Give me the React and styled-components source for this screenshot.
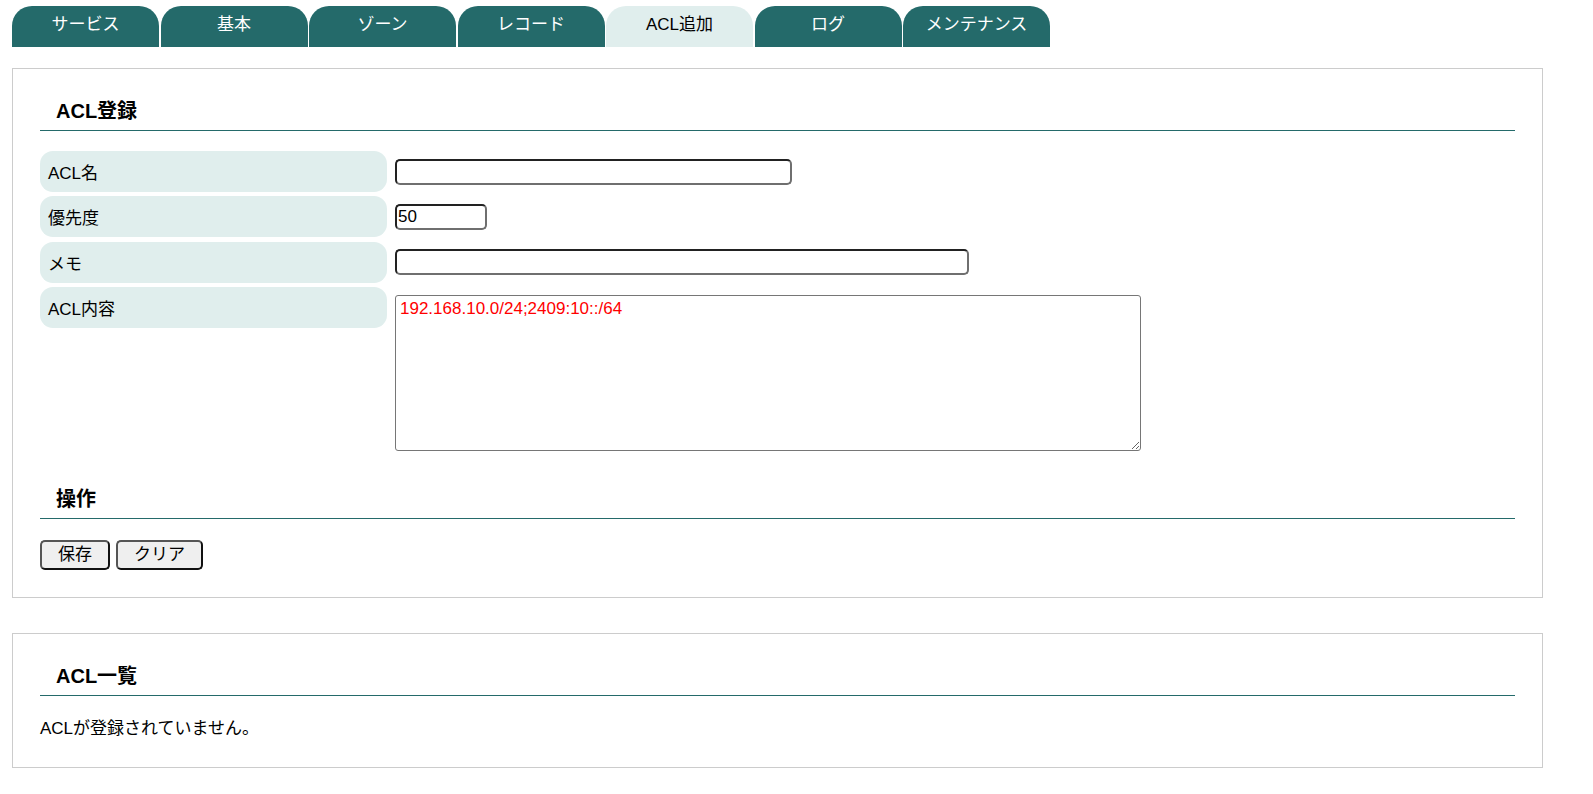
import React from "react";
import styled, { createGlobalStyle } from "styled-components";

const GlobalStyle = createGlobalStyle`
  body {
    margin: 0;
    background: #fff;
    font-family: "Liberation Sans", Arial, "Noto Sans CJK JP", sans-serif;
    font-size: 17px;
    color: #000;
  }
`;

const Page = styled.div`
  padding: 6px 50px 10px 12px;
`;

const TabBar = styled.nav`
  display: flex;
  gap: 1.5px;
  height: 41px;
`;

const Tab = styled.div`
  width: 147px;
  height: 41px;
  box-sizing: border-box;
  padding-top: 9px;
  line-height: 20px;
  text-align: center;
  border-radius: 20px 20px 0 0;
  background: ${(p) => (p.$active ? "#e0eeed" : "#246a6a")};
  color: ${(p) => (p.$active ? "#000" : "#fff")};
  cursor: pointer;
`;

const Panel = styled.section`
  margin-top: ${(p) => p.$top || 21}px;
  border: 1px solid #ccc;
  padding: 30px 27px ${(p) => p.$bottom || 27}px;
`;

const Heading = styled.h3`
  margin: ${(p) => p.$top || 0}px 0 0;
  padding: 0 16px 7px;
  font-size: 20px;
  font-weight: bold;
  line-height: 24px;
  border-bottom: 1px solid #246a6a;
`;

const Form = styled.div`
  margin-top: 20px;
  display: flex;
  flex-direction: column;
  gap: 4.4px;
`;

const Row = styled.div`
  display: flex;
  align-items: flex-start;
  gap: 8px;
`;

const Label = styled.div`
  width: 347px;
  height: 41px;
  flex: none;
  box-sizing: border-box;
  display: flex;
  align-items: center;
  padding: 0 8px;
  background: #e0eeed;
  border-radius: 13px;
`;

const Field = styled.div`
  min-height: 41px;
  display: flex;
  align-items: center;
`;

const TextInput = styled.input`
  width: ${(p) => p.$w}px;
  height: 26px;
  box-sizing: border-box;
  padding: 1px 1px;
  font: inherit;
  font-size: 17px;
  line-height: 20px;
  border-width: 2px;
  border-style: solid;
  border-color: #222 #6f6f6f #6f6f6f #222;
  border-radius: 5px;
  background: #fff;
  color: #000;
  outline: none;
`;

const Area = styled.textarea`
  margin-top: 8px;
  width: 746px;
  height: 156px;
  box-sizing: border-box;
  padding: 3px 4px;
  font: inherit;
  font-size: 17px;
  line-height: 20px;
  color: #f00;
  border: 1px solid #767676;
  border-radius: 3px;
  outline: none;
`;

const Buttons = styled.div`
  margin-top: 21px;
  display: flex;
  gap: 6px;
`;

const Button = styled.button`
  height: 30px;
  box-sizing: border-box;
  padding: 0 16px;
  font: inherit;
  font-size: 17px;
  line-height: 20px;
  background: #efefef;
  color: #000;
  border: 2px solid #222;
  border-color: #555 #111 #111 #555;
  border-radius: 5px;
  cursor: pointer;
`;

const Empty = styled.p`
  margin: 21px 0 0;
  line-height: 24px;
`;

const tabs = ["サービス", "基本", "ゾーン", "レコード", "ACL追加", "ログ", "メンテナンス"];

export default function App() {
  return (
    <>
      <GlobalStyle />
      <Page>
        <TabBar>
          {tabs.map((t) => (
            <Tab key={t} $active={t === "ACL追加"}>
              {t}
            </Tab>
          ))}
        </TabBar>

        <Panel>
          <Heading>ACL登録</Heading>
          <Form>
            <Row>
              <Label>ACL名</Label>
              <Field>
                <TextInput $w={397} />
              </Field>
            </Row>
            <Row>
              <Label>優先度</Label>
              <Field>
                <TextInput $w={92} defaultValue="50" />
              </Field>
            </Row>
            <Row>
              <Label>メモ</Label>
              <Field>
                <TextInput $w={574} />
              </Field>
            </Row>
            <Row>
              <Label>ACL内容</Label>
              <Area defaultValue="192.168.10.0/24;2409:10::/64" />
            </Row>
          </Form>
          <Heading $top={36}>操作</Heading>
          <Buttons>
            <Button>保存</Button>
            <Button>クリア</Button>
          </Buttons>
        </Panel>

        <Panel $top={35} $bottom={26}>
          <Heading>ACL一覧</Heading>
          <Empty>ACLが登録されていません。</Empty>
        </Panel>
      </Page>
    </>
  );
}
